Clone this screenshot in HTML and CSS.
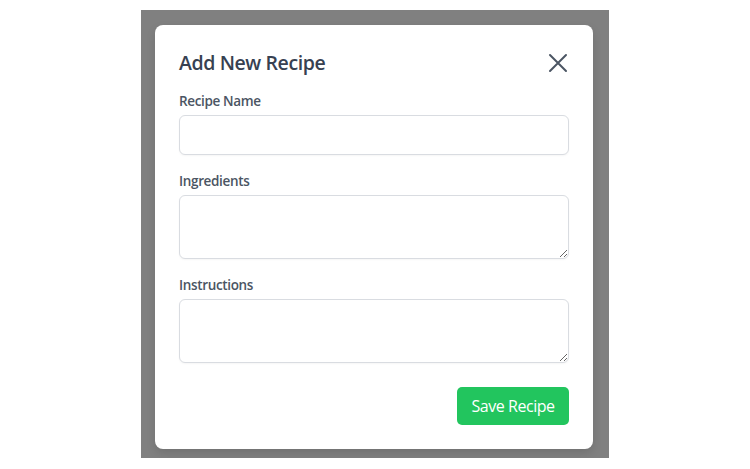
FILE: index.html
```html
<!DOCTYPE html>
<html lang="en">
<head>
<meta charset="utf-8">
<title>Add New Recipe</title>
<link rel="stylesheet" href="styles.css">
</head>
<body>
<div class="overlay">
  <div class="modal">
    <div class="modal-header">
      <h2 class="modal-title">Add New Recipe</h2>
      <button class="close-btn" type="button" aria-label="Close">
        <svg width="24" height="24" viewBox="0 0 24 24" fill="none" stroke="currentColor" stroke-width="2" stroke-linecap="round"><path d="M4 4L20 20M20 4L4 20"/></svg>
      </button>
    </div>
    <form class="form">
      <div class="field">
        <label class="label" for="name">Recipe Name</label>
        <input class="input" id="name" type="text">
      </div>
      <div class="field">
        <label class="label" for="ing">Ingredients</label>
        <textarea class="textarea" id="ing"></textarea>
      </div>
      <div class="field field-last">
        <label class="label" for="ins">Instructions</label>
        <textarea class="textarea" id="ins"></textarea>
      </div>
      <div class="actions">
        <button class="save-btn" type="button">Save Recipe</button>
      </div>
    </form>
  </div>
</div>
</body>
</html>
```

FILE: styles.css
```css
* { box-sizing: border-box; }
html, body { margin: 0; padding: 0; background: #ffffff; }
body {
  font-family: "Open Sans", "Noto Sans", sans-serif;
  color: #374151;
}
.overlay {
  width: 468px;
  height: 448px;
  margin: 10px 0 0 141px;
  background: #808080;
  padding: 15px 0 0 14px;
}
.modal {
  width: 438px;
  background: #ffffff;
  border-radius: 8px;
  padding: 24px;
  box-shadow: 0 4px 10px rgba(0,0,0,0.12);
}
.modal-header {
  display: flex;
  align-items: center;
  justify-content: space-between;
  margin-bottom: 14px;
  height: 28px;
}
.modal-title {
  margin: 0;
  font-size: 19.5px;
  line-height: 28px;
  font-weight: 600;
  letter-spacing: -0.4px;
  color: #374151;
}
.close-btn {
  border: 0;
  background: none;
  padding: 0;
  margin-right: -1px;
  width: 24px;
  height: 24px;
  color: #4b5563;
  display: flex;
  cursor: pointer;
}
.form { margin: 0; }
.field { margin-bottom: 16px; }
.field-last { margin-bottom: 24px; }
.label {
  display: block;
  font-size: 13.5px;
  line-height: 20px;
  font-weight: 600;
  letter-spacing: -0.35px;
  color: #4b5563;
  margin-bottom: 4px;
}
.input, .textarea {
  display: block;
  width: 100%;
  border: 1px solid #d9dce1;
  border-radius: 6px;
  background: #ffffff;
  font-family: inherit;
  font-size: 14px;
  padding: 8px 12px;
  box-shadow: 0 1px 2px rgba(0,0,0,0.04);
  margin: 0;
}
.input { height: 40px; }
.textarea { height: 64px; resize: vertical; }
.actions {
  display: flex;
  justify-content: flex-end;
}
.save-btn {
  background: #22c55e;
  color: #ffffff;
  border: 0;
  border-radius: 5px;
  height: 38px;
  width: 112px;
  padding: 0;
  font-family: inherit;
  font-size: 16px;
  font-weight: 400;
  letter-spacing: -0.45px;
  cursor: pointer;
}
```
